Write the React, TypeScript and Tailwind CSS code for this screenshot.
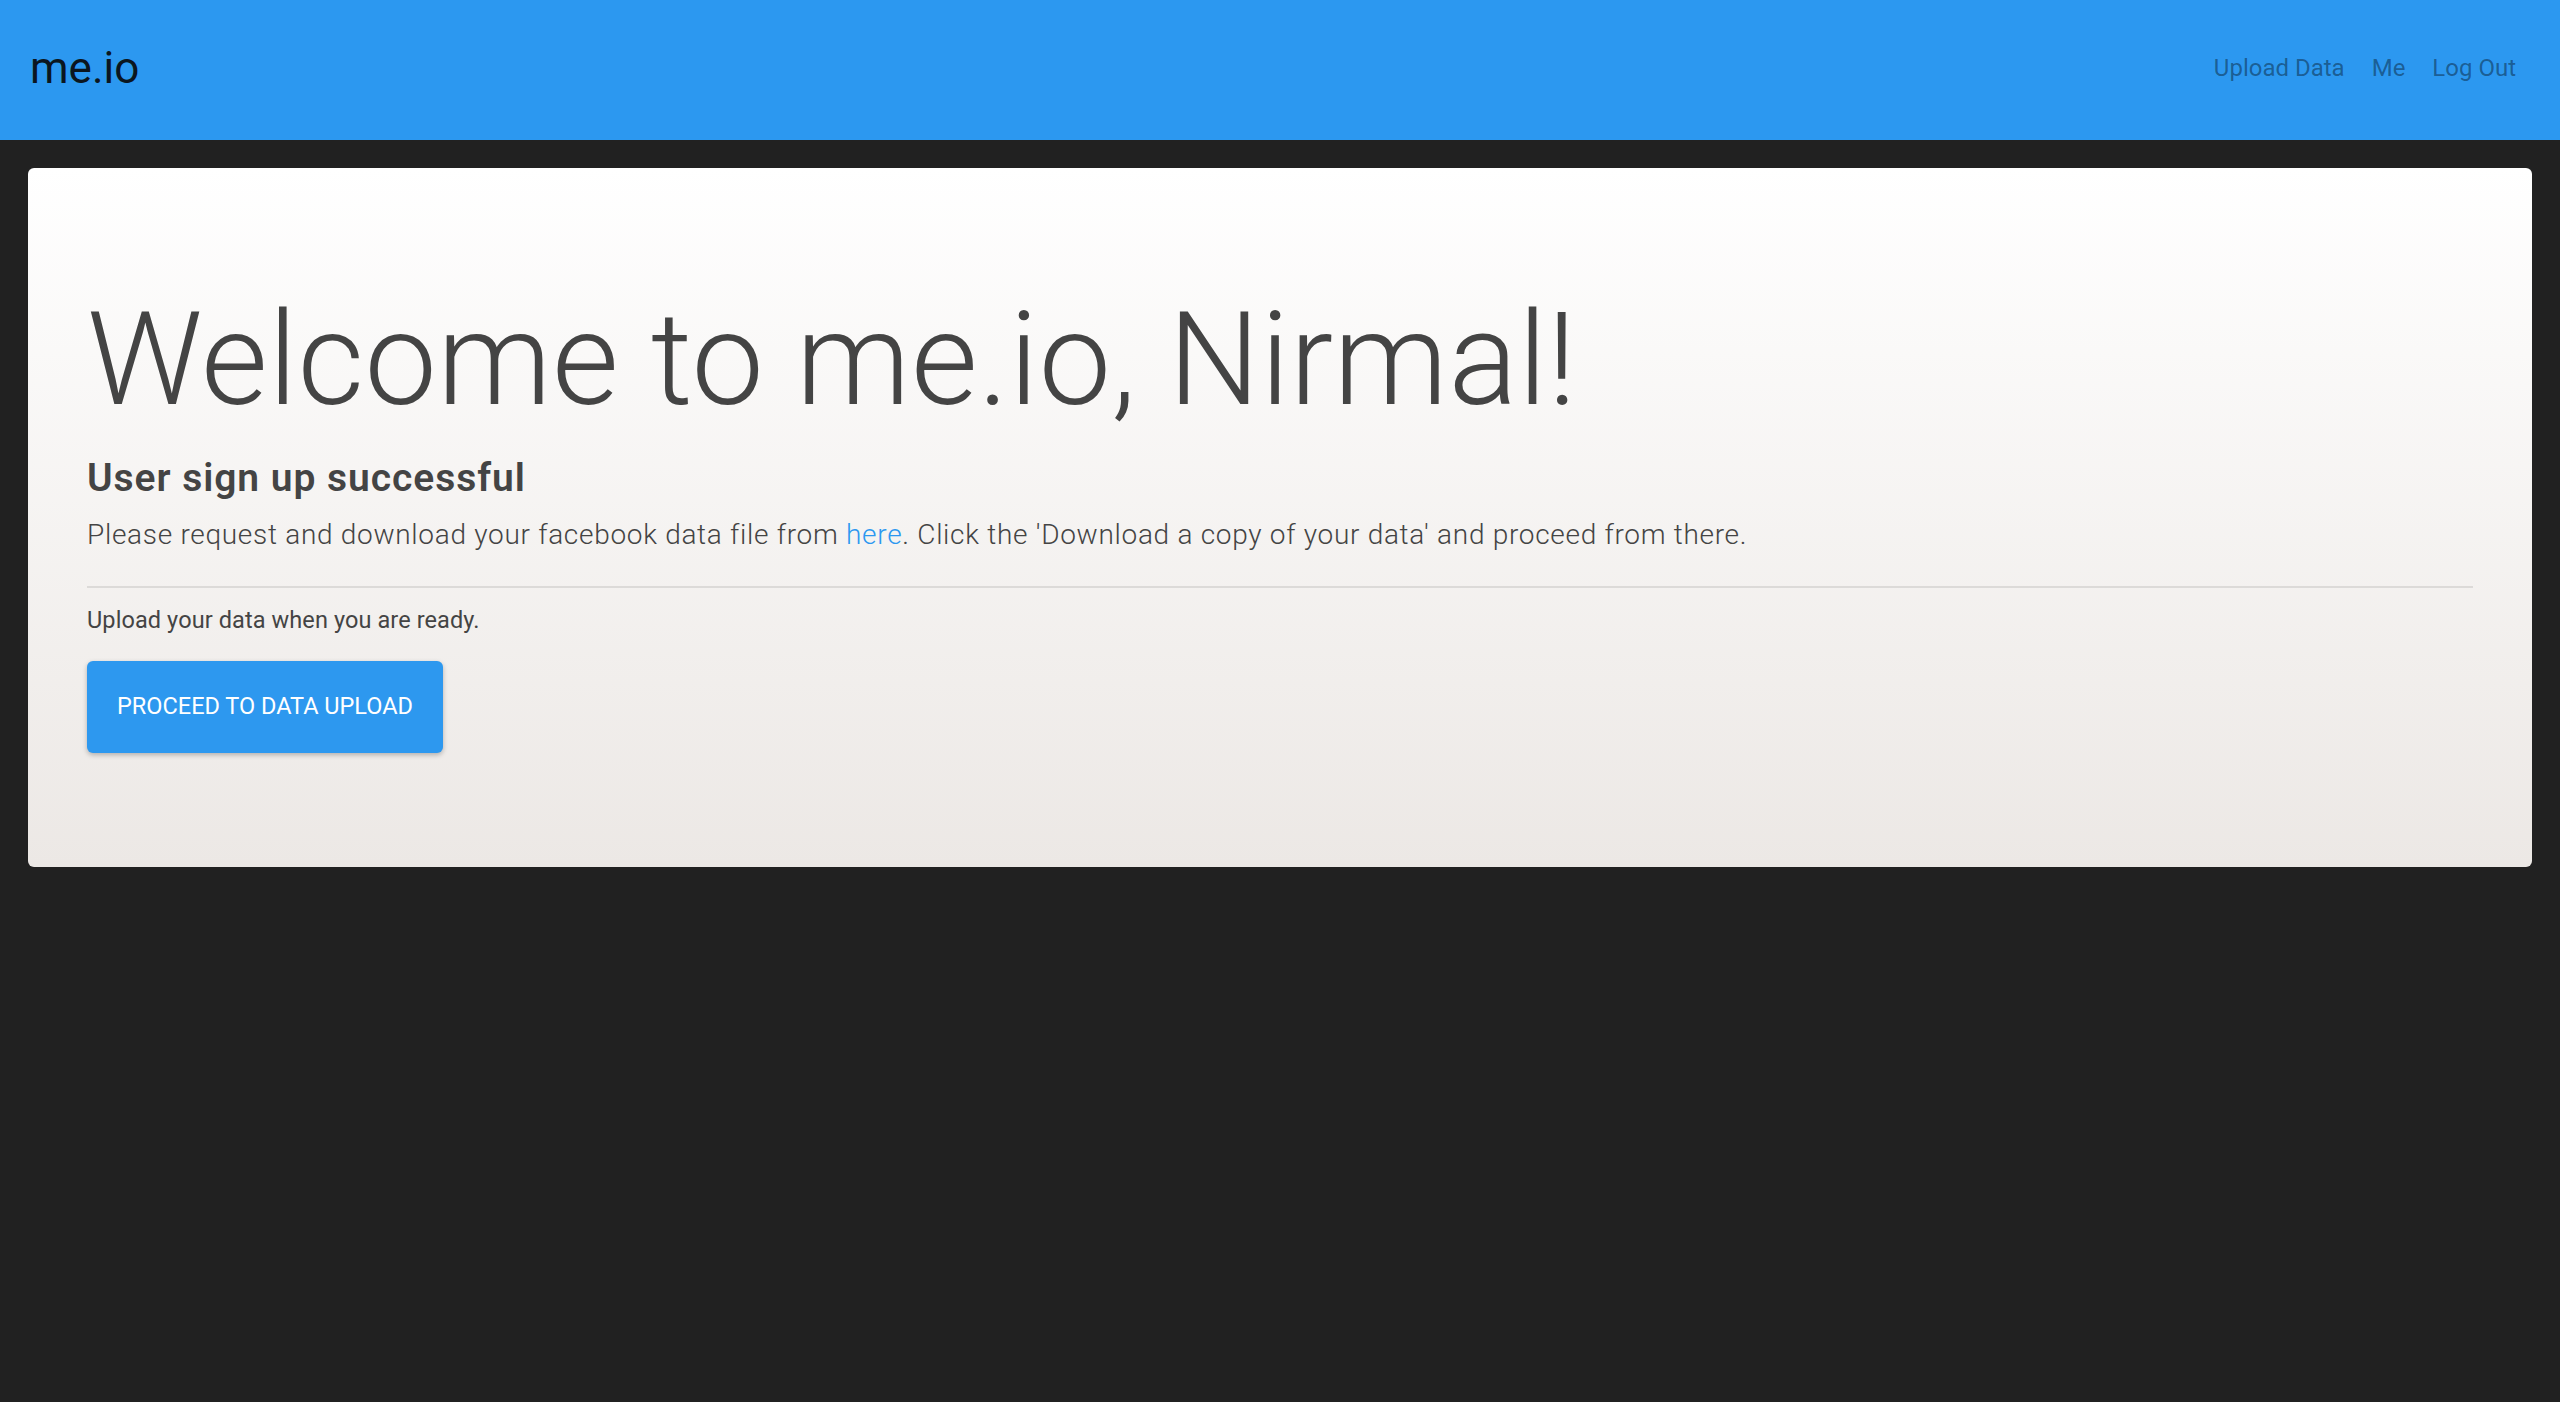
const App = () => {
  return (
    <div className="min-h-screen bg-[#212121] font-['Roboto',sans-serif]">
      {/* Top bar */}
      <nav className="h-[140px] bg-[#2c98f0] flex items-center justify-between pl-[30px] pr-[44px]">
        <a href="#" className="text-[44px] leading-none text-[#0b1620] pb-[4px]">
          me.io
        </a>
        <ul className="flex items-center gap-[27px] text-[24px] leading-none text-black/40 pb-[4px]">
          <li>
            <a href="#">Upload Data</a>
          </li>
          <li>
            <a href="#">Me</a>
          </li>
          <li>
            <a href="#">Log Out</a>
          </li>
        </ul>
      </nav>

      <div className="px-[28px] pt-[28px]">
        <div className="rounded-[6px] bg-gradient-to-b from-white to-[#ece8e5] px-[59px] pt-[127px] pb-[114px] text-[#444]">
          <h1 className="text-[129px] font-light leading-none tracking-[0.4px]">
            Welcome to me.io, Nirmal!
          </h1>
          <h3 className="mt-[35px] text-[39px] font-semibold leading-none tracking-[0.95px]">
            User sign up successful
          </h3>
          <p className="mt-[23px] text-[28px] font-light leading-none tracking-[0.7px]">
            Please request and download your facebook data file from{" "}
            <a href="#" className="text-[#2c98f0]">
              here
            </a>
            . Click the 'Download a copy of your data' and proceed from there.
          </p>
          <hr className="mt-[37px] border-0 border-t-[2px] border-[#dcdad8]" />
          <p className="mt-[21px] text-[23.5px] leading-none tracking-[0.1px]">
            Upload your data when you are ready.
          </p>
          <button className="mt-[28px] h-[92px] w-[356px] rounded-[6px] bg-[#2d98ef] text-[23.5px] uppercase leading-none text-white shadow-[0_2px_5px_rgba(0,0,0,0.26)]">
            Proceed to data upload
          </button>
        </div>
      </div>
    </div>
  );
};

export default App;
